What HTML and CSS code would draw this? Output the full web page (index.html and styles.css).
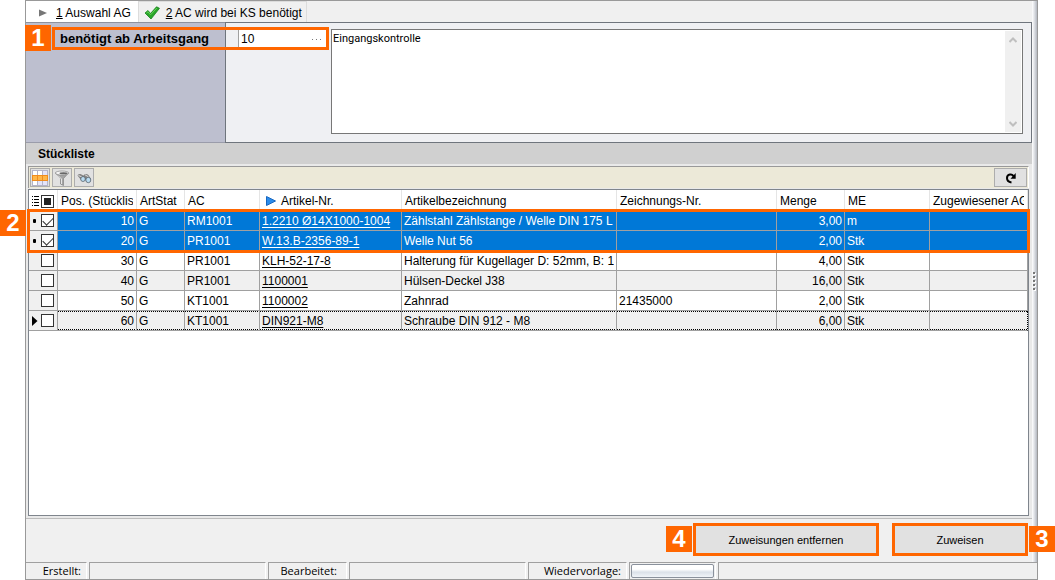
FILE: index.html
```html
<!DOCTYPE html>
<html lang="de">
<head>
<meta charset="utf-8">
<title>Stückliste</title>
<link rel="stylesheet" href="styles.css">
</head>
<body>
<div class="window">
  <div class="main">
    <div class="content">
      <nav class="tabs">
        <button class="tab tab-active" type="button">
          <svg class="tab-arrow" width="8" height="8" viewBox="0 0 8 8"><path d="M0 0.500 8 4 0 7.500z" fill="#777"/></svg>
          <span><u>1</u> Auswahl AG</span>
        </button>
        <button class="tab" type="button">
          <svg class="tab-check" width="16" height="14" viewBox="0 0 16 14"><path d="M1 7 4 4.500 6.500 7.500 12.500 .8 15.500 2.300 7 13z" fill="#2aa52a" stroke="#16801c" stroke-width=".8"/><path d="M2.500 7 4 5.800 6.500 8.800 12.800 2" fill="none" stroke="#62d552"/></svg>
          <span><u>2</u> AC wird bei KS benötigt</span>
        </button>
      </nav>

      <section class="form">
        <div class="form-label"><label for="ag">benötigt ab Arbeitsgang</label></div>
        <div class="form-fields">
          <div class="lookup">
            <input id="ag" type="text" value="10">
            <button class="lookup-more" type="button" aria-label="Auswählen"><svg width="9" height="1" viewBox="0 0 9 1"><path d="M0 0h1v1H0zM4 0h1v1H4zM8 0h1v1H8z" fill="#777"/></svg></button>
          </div>
          <div class="memo">
            <textarea aria-label="Bezeichnung">Eingangskontrolle</textarea>
            <div class="scroll">
              <svg width="8" height="6" viewBox="0 0 8 6"><path d="M.5 5 4 1.500 7.500 5" fill="none" stroke="#bfbfbf" stroke-width="2"/></svg>
              <svg width="8" height="6" viewBox="0 0 8 6"><path d="M.5 1 4 4.500 7.500 1" fill="none" stroke="#bfbfbf" stroke-width="2"/></svg>
            </div>
          </div>
        </div>
        <div class="frame frame-field"></div>
        <span class="badge badge-field">1</span>
      </section>

      <section class="group">
        <h2 class="group-title">Stückliste</h2>
        <div class="group-body">
          <div class="toolbar">
            <button class="tool" type="button" aria-label="Tabelle">
              <svg width="16" height="16" viewBox="0 0 16 16"><path fill="#b4b4c8" d="M0 0h16v16H0z"/><path fill="#fff" d="M1 1h4v4H1zM6 1h4v4H6zM11 1h4v4h-4zM1 11h4v4H1z"/><path fill="#e4e4fa" d="M6 11h4v4H6zM11 11h4v4h-4zM11 1h4v4h-4z"/><path fill="#f08c1e" d="M0 5h16v6H0z"/><path fill="#ffb648" d="M1 6h4v4H1zM6 6h4v4H6zM11 6h4v4h-4z"/></svg>
            </button>
            <button class="tool" type="button" aria-label="Filter">
              <svg width="16" height="16" viewBox="0 0 16 16"><path d="M1.500 3 6.500 8.500v5.500l3 1.500v-7l5-5.500z" fill="#a5a5a5" stroke="#777" stroke-width=".6"/><path d="M4 5.500 7.500 9v5" fill="none" stroke="#e6e6e6"/><ellipse cx="8" cy="3" rx="6.700" ry="2" fill="#f4f4f4" stroke="#888" stroke-width=".7"/><ellipse cx="9.500" cy="3.200" rx="4" ry="1" fill="#666"/></svg>
            </button>
            <button class="tool" type="button" aria-label="Suchen">
              <svg width="16" height="16" viewBox="0 0 16 16"><path d="M1.500 5.500Q2 3.500 4.500 4l3 1.500L9 4q2-.5 3.500 1l2.500 4-2 3-5-2.500-3 .5z" fill="#858585"/><path d="M2.500 5.500 6 7M9 4.800l3.500 2" stroke="#ddd"/><ellipse cx="7" cy="9" rx="2.300" ry="2.500" fill="#b9dcf2" stroke="#59646e" stroke-width=".8"/><ellipse cx="12.300" cy="10" rx="2.500" ry="2.700" fill="#b9dcf2" stroke="#59646e" stroke-width=".8"/></svg>
            </button>
            <button class="tool tool-refresh" type="button" aria-label="Aktualisieren">
              <svg width="12" height="12" viewBox="0 0 12 12"><path d="M8.500 4.500C7.500 1.500 2 1.500 2 6c0 2.500 1.500 4 4.500 4.500" fill="none" stroke="#000" stroke-width="2"/><path d="M10.700 1v5.700H5.500z"/></svg>
            </button>
          </div>

          <div class="grid-box">
            <table class="grid">
              <colgroup><col class="c-sel"><col class="c-pos"><col class="c-art"><col class="c-ac"><col class="c-nr"><col><col class="c-draw"><col class="c-qty"><col class="c-me"><col class="c-assign"></colgroup>
              <thead>
                <tr>
                  <th><div class="sel"><svg class="mark" width="7" height="10" viewBox="0 0 7 10"><path d="M0 0h1v1H0zM2 0h5v1H2zM0 3h1v1H0zM2 3h5v1H2zM0 6h1v1H0zM2 6h5v1H2zM0 9h1v1H0zM2 9h5v1H2z"/></svg><input class="check check-part" type="checkbox" aria-label="Alle"></div></th>
                  <th><div class="clip">Pos. (Stücklis</div></th><th>ArtStat</th><th>AC</th>
                  <th><svg class="sort" width="10" height="10" viewBox="0 0 10 10"><path d="M.5.500 9.500 5 .5 9.500z" fill="#2b8ceb" stroke="#1766c0"/></svg>Artikel-Nr.</th>
                  <th>Artikelbezeichnung</th><th>Zeichnungs-Nr.</th><th>Menge</th><th>ME</th><th><div class="clip">Zugewiesener AG</div></th>
                </tr>
              </thead>
              <tbody>
                <tr class="picked"><td><div class="sel"><span class="mark"><i class="dot"></i></span><input class="check" type="checkbox" checked aria-label="Position 10"></div></td><td class="num">10</td><td>G</td><td>RM1001</td><td><a href="#">1.2210 Ø14X1000-1004</a></td><td>Zählstahl Zählstange / Welle DIN 175 L</td><td></td><td class="num">3,00</td><td>m</td><td></td></tr>
                <tr class="picked"><td><div class="sel"><span class="mark"><i class="dot"></i></span><input class="check" type="checkbox" checked aria-label="Position 20"></div></td><td class="num">20</td><td>G</td><td>PR1001</td><td><a href="#">W.13.B-2356-89-1</a></td><td>Welle Nut 56</td><td></td><td class="num">2,00</td><td>Stk</td><td></td></tr>
                <tr><td><div class="sel"><span class="mark"></span><input class="check" type="checkbox" aria-label="Position 30"></div></td><td class="num">30</td><td>G</td><td>PR1001</td><td><a href="#">KLH-52-17-8</a></td><td><div class="clip">Halterung für Kugellager D: 52mm, B: 1</div></td><td></td><td class="num">4,00</td><td>Stk</td><td></td></tr>
                <tr class="alt"><td><div class="sel"><span class="mark"></span><input class="check" type="checkbox" aria-label="Position 40"></div></td><td class="num">40</td><td>G</td><td>PR1001</td><td><a href="#">1100001</a></td><td>Hülsen-Deckel J38</td><td></td><td class="num">16,00</td><td>Stk</td><td></td></tr>
                <tr><td><div class="sel"><span class="mark"></span><input class="check" type="checkbox" aria-label="Position 50"></div></td><td class="num">50</td><td>G</td><td>KT1001</td><td><a href="#">1100002</a></td><td>Zahnrad</td><td>21435000</td><td class="num">2,00</td><td>Stk</td><td></td></tr>
                <tr class="alt current"><td><div class="sel"><span class="mark"><svg width="6" height="10" viewBox="0 0 6 10"><path d="M0 0 5.500 5 0 10z"/></svg></span><input class="check" type="checkbox" aria-label="Position 60"></div></td><td class="num">60</td><td>G</td><td>KT1001</td><td><a href="#">DIN921-M8</a></td><td>Schraube DIN 912 - M8</td><td></td><td class="num">6,00</td><td>Stk</td><td></td></tr>
              </tbody>
            </table>
            <div class="frame frame-rows"></div>
            <span class="badge badge-rows">2</span>
          </div>
        </div>
      </section>

      <div class="actions">
        <div class="action"><button class="action-button action-wide" type="button">Zuweisungen entfernen</button><span class="badge badge-before">4</span></div>
        <div class="action"><button class="action-button" type="button">Zuweisen</button><span class="badge badge-after">3</span></div>
      </div>
    </div>
    <div class="splitter"><svg width="4" height="19" viewBox="0 0 4 19"><path d="M1 1h2v2H1zM1 5h2v2H1zM1 9h2v2H1zM1 13h2v2H1zM1 17h2v2H1z" fill="#fff"/><path d="M0 0h2v2H0zM0 4h2v2H0zM0 8h2v2H0zM0 12h2v2H0zM0 16h2v2H0z" fill="#777"/></svg></div>
  </div>

  <footer class="status">
    <div class="pane pane-first">Erstellt:</div>
    <div class="pane pane-value"></div>
    <div class="pane pane-edited">Bearbeitet:</div>
    <div class="pane pane-value"></div>
    <div class="pane pane-resub">Wiedervorlage:</div>
    <div class="pane pane-button"><button class="status-button" type="button" aria-label="Wiedervorlage"></button></div>
    <div class="pane pane-rest"></div>
  </footer>
</div>
</body>
</html>
```

FILE: styles.css
```css
* { box-sizing: border-box; }

body {
  margin: 0;
  padding: 0 17px 0 25px;
  background: #fff;
  color: #000;
  font: 12px/16px "Liberation Sans", Arial, sans-serif;
}

button, input, textarea {
  margin: 0;
  padding: 0;
  border: 0;
  border-radius: 0;
  color: inherit;
  font: inherit;
}

svg { display: block; flex: none; }

.window {
  display: flex;
  flex-direction: column;
  height: 100vh;
  border: 1px solid #999;
  background: #f0f0f0;
}

.main { display: flex; flex: 1; min-height: 0; }
.content { display: flex; flex: 1; flex-direction: column; min-width: 0; }

.splitter {
  display: flex;
  align-items: center;
  justify-content: flex-end;
  width: 5px;
  background: linear-gradient(90deg, #fff, #e4e6ea 40%, #b4b8c0);
}

/* Tabs */
.tabs { display: flex; height: 21px; }

.tab {
  display: flex;
  align-items: center;
  gap: 6px;
  padding: 2px 4px 0 5px;
  border: 1px solid #dcdcdc;
  border-bottom: 0;
  background: #f0f0f0;
}

.tab-active {
  gap: 9px;
  padding: 2px 7px 0 13px;
  border: 0;
  background: #fff;
}

/* Form */
.form { position: relative; display: flex; height: 121px; }

.form-label {
  width: 199px;
  padding: 8px 0 0 34px;
  border-top: 1px solid #8e929e;
  border-bottom: 1px solid #9a9caa;
  background: #bdbfcf;
  font-size: 13px;
  font-weight: bold;
  white-space: nowrap;
}

.form-fields {
  display: flex;
  flex: 1;
  gap: 5px;
  min-width: 0;
  padding: 6px 8px 8px 12px;
  border: 1px solid #6f757d;
  background: #eff0f3;
}

.lookup {
  display: flex;
  width: 88px;
  height: 20px;
  border-left: 1px solid #a0a0a0;
  background: #fff;
}

.lookup input { flex: 1; min-width: 0; padding-left: 2px; background: none; }
.lookup-more { width: 14px; background: none; }

.memo {
  display: flex;
  flex: 1;
  min-width: 0;
  padding: 1px;
  border: 1px solid #777;
  background: #fff;
}

.memo textarea {
  flex: 1;
  min-width: 0;
  resize: none;
  background: none;
  font: 11px/16px Roboto, "Noto Sans", sans-serif;
}

.scroll {
  display: flex;
  flex-direction: column;
  align-items: center;
  justify-content: space-between;
  width: 16px;
  padding: 6px 0 5px;
  background: #f0f0f0;
}

/* Parts list */
.group {
  display: flex;
  flex: 1;
  flex-direction: column;
  min-height: 0;
  border-bottom: 1px solid #bcbcbc;
  background: #e9e9e9;
}

.group-title {
  margin: 0;
  padding: 3px 12px 2px;
  background: #d0d0d0;
  font-size: 12px;
  line-height: 16px;
}

.group-body {
  display: flex;
  flex: 1;
  flex-direction: column;
  gap: 1px;
  min-height: 0;
  padding: 2px 3px 2px 2px;
}

.toolbar {
  display: flex;
  gap: 2px;
  height: 22px;
  padding: 1px 1px 0;
  border: 1px solid #999;
  border-right-color: #fff;
  border-bottom: 0;
  background: #ece9d8;
}

.tool {
  display: flex;
  align-items: center;
  justify-content: center;
  width: 20px;
  height: 19px;
  border: 1px solid #adadad;
  background: #e1e1e1;
}

.tool-refresh { width: 33px; margin-left: auto; }

.grid-box {
  position: relative;
  flex: 1;
  min-height: 0;
  border: 1px solid #7f858d;
  background: #fff;
}

.grid {
  width: 100%;
  border-collapse: separate;
  border-spacing: 0;
  table-layout: fixed;
}

.c-sel { width: 29px; }
.c-pos { width: 79px; }
.c-art { width: 48px; }
.c-ac { width: 75px; }
.c-nr { width: 142px; }
.c-draw { width: 160px; }
.c-qty { width: 68px; }
.c-me { width: 85px; }
.c-assign { width: 98px; }

.grid th, .grid td {
  overflow: hidden;
  height: 20px;
  padding: 0 2px;
  border-right: 1px solid #a0a0a0;
  border-bottom: 1px solid #a0a0a0;
  text-align: left;
  white-space: nowrap;
}

.grid th {
  height: 21px;
  padding: 2px 3px 0;
  border-right-color: #e5e5e5;
  border-bottom-color: #fff;
  font-weight: normal;
}

.clip { overflow: hidden; }

.grid td.num { text-align: right; }
.grid td:first-child { padding: 0 3px; background: #f0f0f0; }
.grid a { color: inherit; text-underline-offset: 2px; }
.alt td { background: #f0f0f0; }
.picked td:not(:first-child) { background: #0078d7; color: #fff; }

.current td:not(:first-child) {
  background:
    repeating-linear-gradient(90deg, #000 0 1px, transparent 1px 2px) top / 100% 1px no-repeat,
    repeating-linear-gradient(90deg, #000 0 1px, transparent 1px 2px) bottom / 100% 1px no-repeat,
    #f0f0f0;
}

.current td:last-child { border-right: 1px dotted #000; }

.sort { display: inline-block; margin: 0 5px 0 3px; vertical-align: -1px; }

.sel { display: flex; align-items: center; gap: 2px; }
.mark { display: flex; flex: none; width: 7px; }
.dot { width: 3px; height: 4px; margin-left: 1px; border-radius: 1px; background: #000; }

.check {
  display: grid;
  flex: none;
  place-content: center;
  width: 13px;
  height: 13px;
  border: 1px solid #333;
  background: #fff;
  appearance: none;
}

.check:checked::before {
  content: "";
  width: 9px;
  height: 5px;
  margin-top: -2px;
  border: solid #333;
  border-width: 0 0 1px 1px;
  transform: rotate(-45deg);
}

.check-part::before { content: ""; width: 7px; height: 7px; background: #222; }

/* Actions */
.actions {
  display: flex;
  justify-content: flex-end;
  gap: 13px;
  padding: 4px 4px 6px;
}

.action { position: relative; }

.action-button {
  width: 136px;
  height: 33px;
  border: 3px solid #f60;
  background: #e1e1e1;
  font-size: 11px;
}

.action-wide { width: 186px; }

/* Callouts */
.frame { position: absolute; border: 3px solid #f60; pointer-events: none; }
.frame-field { top: 5px; left: 26px; width: 277px; height: 23px; }
.frame-rows { top: 19px; right: -2px; left: -2px; height: 44px; }

.badge {
  position: absolute;
  width: 26px;
  height: 26px;
  background: #f60;
  color: #fff;
  font: bold 24px/26px "Liberation Sans", Arial, sans-serif;
  text-align: center;
}

.badge-field { top: 3px; left: -1px; }
.badge-rows { top: 20px; left: -29px; }
.badge-before { top: 3px; right: 100%; margin-right: 1px; }
.badge-after { top: 3px; left: 100%; margin-left: 1px; }

/* Status bar */
.status {
  display: flex;
  gap: 2px;
  height: 17px;
  font: 11px/16px "Open Sans", "Noto Sans", sans-serif;
}

.pane {
  padding-right: 5px;
  border: solid #a0a0a0;
  border-width: 1px 1px 0;
  border-right-color: #fff;
  text-align: right;
}

.pane-first { width: 61px; border-left: 0; }
.pane-value { width: 177px; }
.pane-edited { width: 79px; padding-right: 9px; }
.pane-resub { width: 99px; }
.pane-button { width: 87px; padding: 1px; }
.pane-rest { flex: 1; border-right: 0; }

.status-button {
  display: block;
  width: 100%;
  height: 14px;
  border: 1px solid #8a919c;
  border-radius: 2px;
  background: linear-gradient(#fff 0 35%, #dbe1e9 60%, #f1f4f8);
}
```
